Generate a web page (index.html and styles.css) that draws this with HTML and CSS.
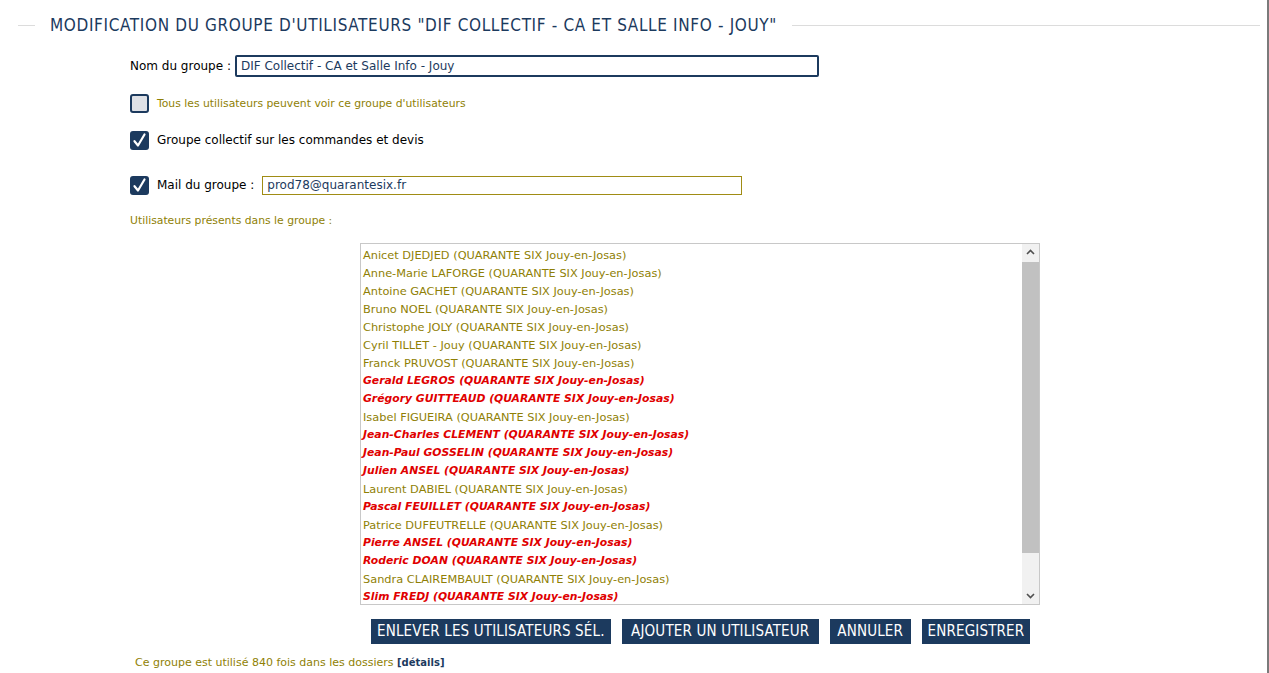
FILE: index.html
```html
<!DOCTYPE html>
<html lang="fr">
<head>
<meta charset="utf-8">
<title>Modification du groupe</title>
<link rel="stylesheet" href="styles.css">
</head>
<body>
<div class="page">
  <fieldset class="panel">
    <legend class="panel-title">MODIFICATION DU GROUPE D'UTILISATEURS "DIF COLLECTIF - CA ET SALLE INFO - JOUY"</legend>
    <div class="form">
      <div class="row row-name">
        <label class="lbl">Nom du groupe :</label>
        <div class="input input-name">DIF Collectif - CA et Salle Info - Jouy</div>
      </div>
      <div class="row row-check1">
        <span class="cb"></span>
        <span class="olive small">Tous les utilisateurs peuvent voir ce groupe d'utilisateurs</span>
      </div>
      <div class="row row-check2">
        <span class="cb cb-on"><svg viewBox="0 0 19 19" width="19" height="19"><path d="M4.5 10.2 L8 14.5 L14.5 3.5" fill="none" stroke="#fff" stroke-width="2.2" stroke-linecap="round" stroke-linejoin="round"/></svg></span>
        <span class="lbl">Groupe collectif sur les commandes et devis</span>
      </div>
      <div class="row row-check3">
        <span class="cb cb-on"><svg viewBox="0 0 19 19" width="19" height="19"><path d="M4.5 10.2 L8 14.5 L14.5 3.5" fill="none" stroke="#fff" stroke-width="2.2" stroke-linecap="round" stroke-linejoin="round"/></svg></span>
        <span class="lbl">Mail du groupe :</span>
        <div class="input input-mail">prod78@quarantesix.fr</div>
      </div>
      <div class="row row-users olive small">Utilisateurs présents dans le groupe :</div>
      <div class="listbox">
        <ul class="items">
          <li>Anicet DJEDJED (QUARANTE SIX Jouy-en-Josas)</li>
          <li>Anne-Marie LAFORGE (QUARANTE SIX Jouy-en-Josas)</li>
          <li>Antoine GACHET (QUARANTE SIX Jouy-en-Josas)</li>
          <li>Bruno NOEL (QUARANTE SIX Jouy-en-Josas)</li>
          <li>Christophe JOLY (QUARANTE SIX Jouy-en-Josas)</li>
          <li>Cyril TILLET - Jouy (QUARANTE SIX Jouy-en-Josas)</li>
          <li>Franck PRUVOST (QUARANTE SIX Jouy-en-Josas)</li>
          <li class="red">Gerald LEGROS (QUARANTE SIX Jouy-en-Josas)</li>
          <li class="red">Grégory GUITTEAUD (QUARANTE SIX Jouy-en-Josas)</li>
          <li>Isabel FIGUEIRA (QUARANTE SIX Jouy-en-Josas)</li>
          <li class="red">Jean-Charles CLEMENT (QUARANTE SIX Jouy-en-Josas)</li>
          <li class="red">Jean-Paul GOSSELIN (QUARANTE SIX Jouy-en-Josas)</li>
          <li class="red">Julien ANSEL (QUARANTE SIX Jouy-en-Josas)</li>
          <li>Laurent DABIEL (QUARANTE SIX Jouy-en-Josas)</li>
          <li class="red">Pascal FEUILLET (QUARANTE SIX Jouy-en-Josas)</li>
          <li>Patrice DUFEUTRELLE (QUARANTE SIX Jouy-en-Josas)</li>
          <li class="red">Pierre ANSEL (QUARANTE SIX Jouy-en-Josas)</li>
          <li class="red">Roderic DOAN (QUARANTE SIX Jouy-en-Josas)</li>
          <li>Sandra CLAIREMBAULT (QUARANTE SIX Jouy-en-Josas)</li>
          <li class="red">Slim FREDJ (QUARANTE SIX Jouy-en-Josas)</li>
        </ul>
        <div class="scrollbar">
          <div class="sb-btn"><svg viewBox="0 0 17 17" width="17" height="17"><path d="M5 10 L8.5 6.5 L12 10" fill="none" stroke="#505050" stroke-width="1.6"/></svg></div>
          <div class="sb-track"><div class="sb-thumb"></div></div>
          <div class="sb-btn"><svg viewBox="0 0 17 17" width="17" height="17"><path d="M5 7 L8.5 10.5 L12 7" fill="none" stroke="#505050" stroke-width="1.6"/></svg></div>
        </div>
      </div>
      <div class="buttons">
        <span class="btn">ENLEVER LES UTILISATEURS SÉL.</span>
        <span class="btn btn-wide">AJOUTER UN UTILISATEUR</span>
        <span class="btn btn-mid">ANNULER</span>
        <span class="btn">ENREGISTRER</span>
      </div>
      <div class="footer"><span class="olive">Ce groupe est utilisé 840 fois dans les dossiers</span> <span class="details">[détails]</span></div>
    </div>
  </fieldset>
</div>
</body>
</html>
```
FILE: styles.css
```css
html, body {
  margin: 0;
  padding: 0;
  background: #fff;
}
body {
  font-family: "DejaVu Sans", "Liberation Sans", sans-serif;
  font-size: 12px;
  color: #000;
}
.page {
  height: 673px;
  border-right: 2px solid #7a7a7a;
  box-sizing: border-box;
  overflow: hidden;
}
.panel {
  margin: 16px 7px 0 18px;
  padding: 0;
  border: 0;
  border-top: 1px solid #dcdcdc;
  min-width: 0;
}
.panel-title {
  margin-left: 17px;
  padding: 0 15px;
  font-family: "DejaVu Sans Condensed", "DejaVu Sans", sans-serif;
  font-size: 17px;
  color: #1c3a5e;
  line-height: 18px;
  letter-spacing: 0.65px;
}
.form {
  padding-left: 112px;
  display: flex;
  flex-direction: column;
}
.row {
  display: flex;
  align-items: center;
}
.lbl {
  color: #000;
  font-size: 12px;
}
.olive {
  color: #8f7f05;
}
.small {
  font-size: 10.8px;
}
.row-name {
  margin-top: 21px;
  height: 22px;
}
.input {
  box-sizing: border-box;
  color: #1c3a5e;
  font-size: 12px;
  display: flex;
  align-items: center;
  padding-left: 4px;
  background: #fff;
}
.input-name {
  margin-left: 4px;
  width: 584px;
  height: 22px;
  border: 2px solid #1c3a5e;
  border-radius: 2px;
}
.row-check1 {
  margin-top: 16px;
  height: 20px;
}
.row-check2 {
  margin-top: 17px;
  height: 20px;
}
.row-check3 {
  margin-top: 25px;
  height: 20px;
}
.cb {
  box-sizing: border-box;
  width: 19px;
  height: 19px;
  border: 2px solid #1c3a5e;
  border-radius: 3px;
  background: #dfe1e6;
  margin-right: 8px;
  flex: none;
  display: flex;
}
.cb-on {
  background: #1c3a5e;
  border: 0;
}
.input-mail {
  margin-left: 8px;
  width: 480px;
  height: 19px;
  border: 1px solid #a08c14;
}
.row-users {
  margin-top: 16px;
  height: 18px;
}
.listbox {
  margin-top: 14px;
  margin-left: 230px;
  width: 680px;
  height: 362px;
  box-sizing: border-box;
  border: 1px solid #c8c8c8;
  display: flex;
}
.items {
  list-style: none;
  margin: 0;
  padding: 2px 0 0 2px;
  flex: 1;
  overflow: hidden;
}
.items li {
  height: 18px;
  line-height: 18px;
  font-size: 11.35px;
  color: #8f7f05;
  white-space: nowrap;
}
.items li.red {
  color: #e00000;
  font-weight: bold;
  font-style: italic;
  font-size: 10.8px;
}
.scrollbar {
  width: 17px;
  display: flex;
  flex-direction: column;
  background: #f1f1f1;
}
.sb-btn {
  height: 17px;
  flex: none;
}
.sb-track {
  flex: 1;
  padding-top: 1px;
}
.sb-thumb {
  height: 291px;
  background: #c1c1c1;
}
.buttons {
  margin-top: 14px;
  margin-left: 241px;
  display: flex;
  gap: 11px;
}
.btn {
  background: #1c3a5e;
  color: #fff;
  height: 25px;
  line-height: 25px;
  padding: 0 6px;
  font-family: "DejaVu Sans Condensed", "DejaVu Sans", sans-serif;
  font-size: 15px;
  letter-spacing: 0.15px;
}
.btn-wide {
  padding: 0 9.5px;
}
.btn-mid {
  padding: 0 7.5px;
}
.footer {
  margin-top: 12px;
  margin-left: 5px;
  font-size: 11px;
}
.details {
  color: #1c3a5e;
  font-weight: bold;
  font-size: 10px;
}
```
